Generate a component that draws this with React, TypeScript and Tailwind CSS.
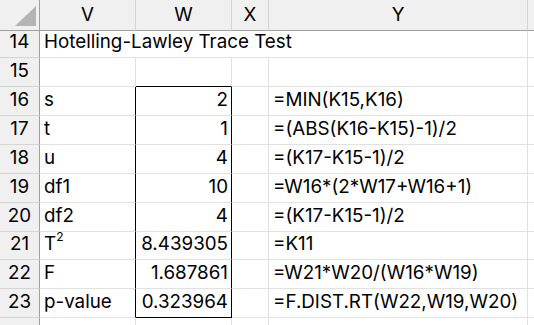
import React from 'react';

const cols = ['V', 'W', 'X', 'Y'];

const rows = [
  { n: 14, h: 'h-[27px]' },
  { n: 15, h: 'h-[29px]' },
  { n: 16, h: 'h-[29px]', v: 's', w: '2', y: '=MIN(K15,K16)' },
  { n: 17, h: 'h-[29px]', v: 't', w: '1', y: '=(ABS(K16-K15)-1)/2' },
  { n: 18, h: 'h-[29px]', v: 'u', w: '4', y: '=(K17-K15-1)/2' },
  { n: 19, h: 'h-[29px]', v: 'df1', w: '10', y: '=W16*(2*W17+W16+1)' },
  { n: 20, h: 'h-[29px]', v: 'df2', w: '4', y: '=(K17-K15-1)/2' },
  { n: 21, h: 'h-[28px]', v: 'T2', w: '8.439305', y: '=K11' },
  { n: 22, h: 'h-[29px]', v: 'F', w: '1.687861', y: '=W21*W20/(W16*W19)' },
  { n: 23, h: 'h-[29px]', v: 'p-value', w: '0.323964', y: '=F.DIST.RT(W22,W19,W20)' },
];

function Label({ text }: { text: string }) {
  if (text === 'T2') {
    return (
      <span>
        T<span className="text-[12px] relative -top-[9px]">2</span>
      </span>
    );
  }
  return <span>{text}</span>;
}

export default function App() {
  return (
    <div
      className="w-[534px] h-[325px] overflow-hidden bg-white text-black text-[18.8px] leading-none"
      style={{ fontFamily: 'Inter, "Liberation Sans", sans-serif' }}
    >
      <div className="grid grid-cols-[40px_96px_96px_37px_259px_1fr]">
        {/* header row */}
        <div className="h-[31px] bg-[#f0f0f0] border-r border-b border-[#9f9f9f] flex items-end justify-end pr-[3px] pb-[4px]">
          <svg width="21" height="20" viewBox="0 0 21 20">
            <polygon points="21,0 21,20 0,20" fill="#b4b4b4" />
          </svg>
        </div>
        {cols.map((c) => (
          <div
            key={c}
            className="h-[31px] bg-[#f0f0f0] border-r border-[#d4d4d4] border-b border-b-[#9f9f9f] flex items-end justify-center pb-[5px]"
          >
            {c}
          </div>
        ))}
        <div className="h-[31px] bg-[#f0f0f0] border-b border-[#9f9f9f]" />

        {rows.map((r) => (
          <React.Fragment key={r.n}>
            <div
              className={`${r.h} bg-[#f0f0f0] border-r border-b border-r-[#9f9f9f] border-b-[#d4d4d4] flex items-end justify-center pb-[5px]`}
            >
              {r.n}
            </div>
            {r.n === 14 ? (
              <div className={`${r.h} col-span-4 border-r border-b border-[#e1e1e1] flex items-end pl-[4px] pb-[5px] whitespace-nowrap`}>
                Hotelling-Lawley Trace Test
              </div>
            ) : (
              <>
                <div
                  className={`${r.h} border-r border-b border-b-[#e1e1e1] flex items-end pl-[4px] pb-[5px] ${
                    r.n >= 16 ? 'border-r-black' : 'border-r-[#e1e1e1]'
                  }`}
                >
                  {r.v && <Label text={r.v} />}
                </div>
                <div
                  className={`${r.h} border-r border-b flex items-end justify-end pr-[3px] pb-[5px] ${
                    r.n >= 16 ? 'border-r-black' : 'border-r-[#e1e1e1]'
                  } ${r.n === 15 || r.n === 23 ? 'border-b-black' : 'border-b-[#e1e1e1]'}`}
                >
                  {r.w}
                </div>
                <div className={`${r.h} border-r border-b border-[#e1e1e1]`} />
                <div className={`${r.h} border-r border-b border-[#e1e1e1] flex items-end pl-[4px] pb-[5px] whitespace-nowrap`}>
                  {r.y}
                </div>
              </>
            )}
            <div className={`${r.h} border-b border-[#e1e1e1]`} />
          </React.Fragment>
        ))}

        <div className="h-[20px] bg-[#f0f0f0] border-r border-[#9f9f9f]" />
        <div className="h-[20px] border-r border-[#e1e1e1]" />
        <div className="h-[20px] border-r border-[#e1e1e1]" />
        <div className="h-[20px] border-r border-[#e1e1e1]" />
        <div className="h-[20px] border-r border-[#e1e1e1]" />
        <div className="h-[20px]" />
      </div>
    </div>
  );
}
